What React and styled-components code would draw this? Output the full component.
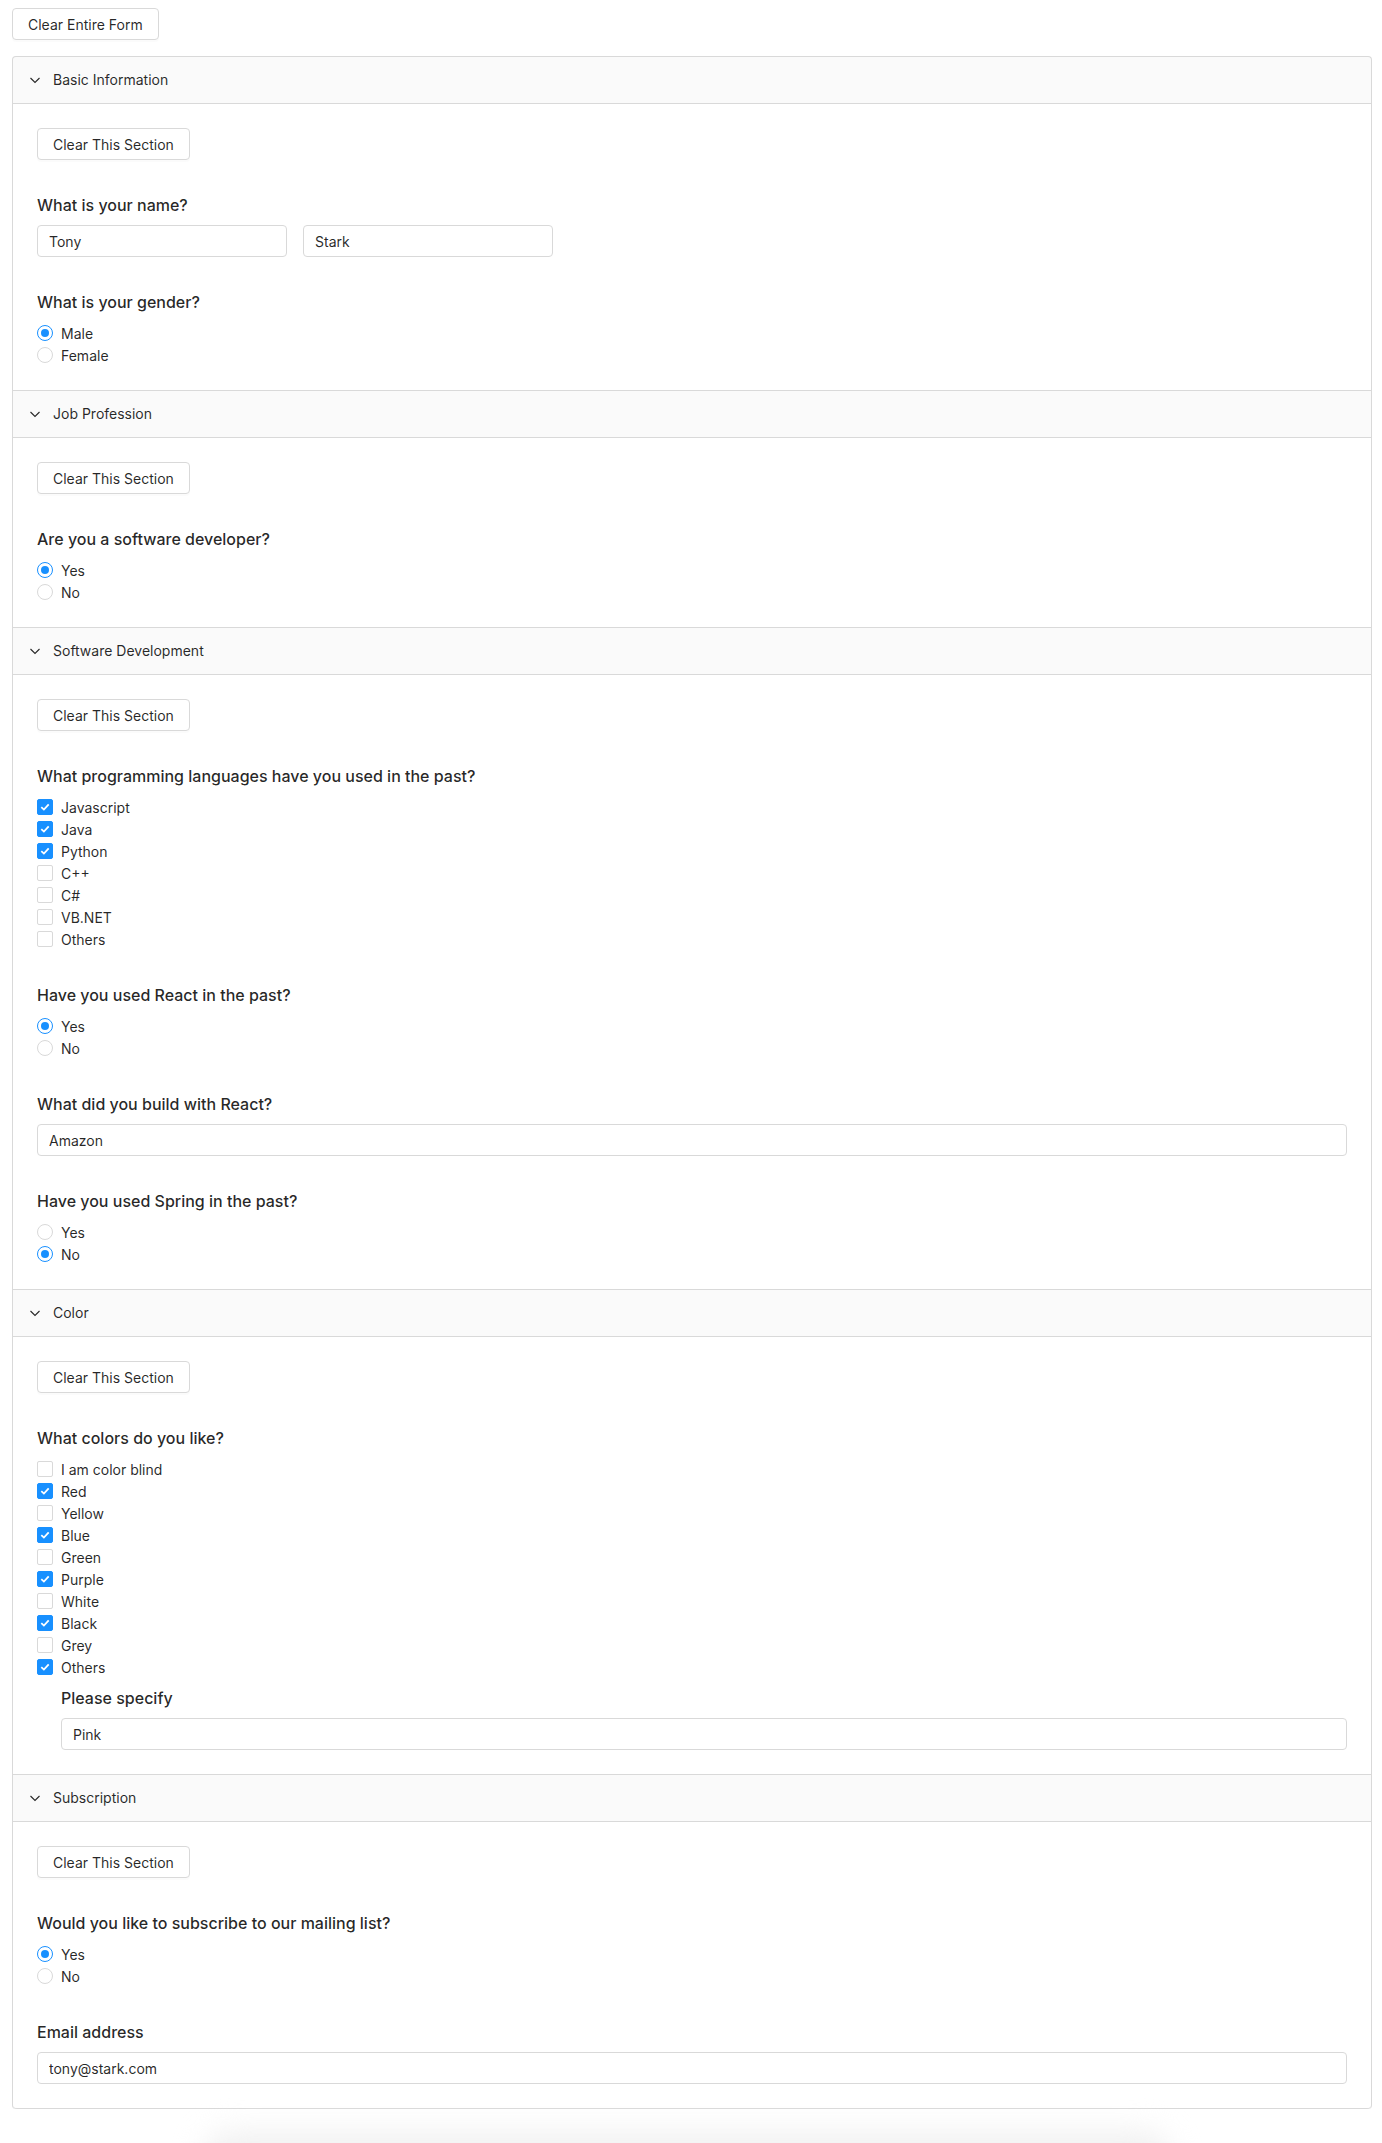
import React from 'react'
import styled, { createGlobalStyle } from 'styled-components'

const GlobalStyle = createGlobalStyle`
  body {
    margin: 0;
    background: #fff;
    font-family: Inter, "Liberation Sans", sans-serif;
    font-size: 14px;
    color: rgba(0, 0, 0, 0.65);
    overflow: hidden;
  }
`

const Page = styled.div`
  padding: 8px 10px 0 12px;
`

const Button = styled.button`
  height: 32px;
  padding: 0 15px;
  font-family: inherit;
  font-size: 14px;
  color: rgba(0, 0, 0, 0.85);
  background: #fff;
  border: 1px solid #d9d9d9;
  border-radius: 4px;
  box-shadow: 0 2px 0 rgba(0, 0, 0, 0.015);
  cursor: pointer;
`

const Collapse = styled.div`
  margin-top: 16px;
  background: #fafafa;
  border: 1px solid #d9d9d9;
  border-bottom: 0;
  border-radius: 4px;
`

const Panel = styled.div`
  border-bottom: 1px solid #d9d9d9;
  &:last-child {
    border-radius: 0 0 4px 4px;
  }
`

const Header = styled.div`
  display: flex;
  align-items: center;
  height: 22px;
  padding: 12px 16px;
  line-height: 22px;
  color: rgba(0, 0, 0, 0.85);
  font-size: 14px;
`

const Arrow = styled.svg`
  width: 12px;
  height: 12px;
  margin-right: 12px;
  color: rgba(0, 0, 0, 0.85);
`

const Body = styled.div`
  background: #fff;
  border-top: 1px solid #d9d9d9;
  padding: 24px;
  ${Panel}:last-child & {
    border-radius: 0 0 4px 4px;
  }
`

const Question = styled.div`
  margin-top: ${(p) => (p.$nested ? '6px' : '31px')};
  margin-left: ${(p) => (p.$nested ? '24px' : '0')};
`

const Label = styled.div`
  font-size: 16px;
  line-height: 28px;
  font-weight: 500;
  color: rgba(0, 0, 0, 0.85);
  margin-bottom: 6px;
`

const InputRow = styled.div`
  display: flex;
  gap: 16px;
`

const Input = styled.input`
  box-sizing: border-box;
  height: 32px;
  width: ${(p) => (p.$short ? '250px' : '100%')};
  padding: 4px 11px;
  font-family: inherit;
  font-size: 14px;
  color: rgba(0, 0, 0, 0.85);
  border: 1px solid #d9d9d9;
  border-radius: 4px;
  outline: none;
`

const OptionList = styled.div`
  display: flex;
  flex-direction: column;
`

const Option = styled.label`
  display: flex;
  align-items: center;
  height: 22px;
  gap: 8px;
  color: rgba(0, 0, 0, 0.85);
  font-size: 14px;
`

const RadioMark = styled.span`
  box-sizing: border-box;
  width: 16px;
  height: 16px;
  border-radius: 50%;
  border: 1px solid ${(p) => (p.$on ? '#1890ff' : '#d9d9d9')};
  background: #fff;
  display: flex;
  align-items: center;
  justify-content: center;
  &::after {
    content: '';
    width: 8px;
    height: 8px;
    border-radius: 50%;
    background: #1890ff;
    display: ${(p) => (p.$on ? 'block' : 'none')};
  }
`

const CheckMark = styled.span`
  box-sizing: border-box;
  width: 16px;
  height: 16px;
  border-radius: 2px;
  border: 1px solid ${(p) => (p.$on ? '#1890ff' : '#d9d9d9')};
  background: ${(p) => (p.$on ? '#1890ff' : '#fff')};
  display: flex;
  align-items: center;
  justify-content: center;
`

const Shade = styled.div`
  margin: 22px 200px 0 190px;
  height: 60px;
  border-radius: 30px;
  background: #f1f1f1;
  filter: blur(14px);
`

const Radios = ({ options, value }) => (
  <OptionList>
    {options.map((o) => (
      <Option key={o}>
        <RadioMark $on={o === value} />
        {o}
      </Option>
    ))}
  </OptionList>
)

const Checks = ({ options, values }) => (
  <OptionList>
    {options.map((o) => {
      const on = values.includes(o)
      return (
        <Option key={o}>
          <CheckMark $on={on}>
            {on && (
              <svg width="10" height="8" viewBox="0 0 10 8">
                <path d="M1.3 4.2 L3.9 6.6 L8.7 1.4" fill="none" stroke="#fff" strokeWidth="1.8" />
              </svg>
            )}
          </CheckMark>
          {o}
        </Option>
      )
    })}
  </OptionList>
)

const Section = ({ title, children }) => (
  <Panel>
    <Header>
      <Arrow viewBox="0 0 12 12">
        <path d="M1.5 4 L6 8.5 L10.5 4" fill="none" stroke="currentColor" strokeWidth="1.1" />
      </Arrow>
      {title}
    </Header>
    <Body>
      <Button>Clear This Section</Button>
      {children}
    </Body>
  </Panel>
)

const App = () => {
  return (
    <Page>
      <GlobalStyle />
      <Button>Clear Entire Form</Button>
      <Collapse>
        <Section title="Basic Information">
          <Question>
            <Label>What is your name?</Label>
            <InputRow>
              <Input $short defaultValue="Tony" />
              <Input $short defaultValue="Stark" />
            </InputRow>
          </Question>
          <Question>
            <Label>What is your gender?</Label>
            <Radios options={['Male', 'Female']} value="Male" />
          </Question>
        </Section>

        <Section title="Job Profession">
          <Question>
            <Label>Are you a software developer?</Label>
            <Radios options={['Yes', 'No']} value="Yes" />
          </Question>
        </Section>

        <Section title="Software Development">
          <Question>
            <Label>What programming languages have you used in the past?</Label>
            <Checks
              options={['Javascript', 'Java', 'Python', 'C++', 'C#', 'VB.NET', 'Others']}
              values={['Javascript', 'Java', 'Python']}
            />
          </Question>
          <Question>
            <Label>Have you used React in the past?</Label>
            <Radios options={['Yes', 'No']} value="Yes" />
          </Question>
          <Question>
            <Label>What did you build with React?</Label>
            <Input defaultValue="Amazon" />
          </Question>
          <Question>
            <Label>Have you used Spring in the past?</Label>
            <Radios options={['Yes', 'No']} value="No" />
          </Question>
        </Section>

        <Section title="Color">
          <Question>
            <Label>What colors do you like?</Label>
            <Checks
              options={['I am color blind', 'Red', 'Yellow', 'Blue', 'Green', 'Purple', 'White', 'Black', 'Grey', 'Others']}
              values={['Red', 'Blue', 'Purple', 'Black', 'Others']}
            />
          </Question>
          <Question $nested>
            <Label>Please specify</Label>
            <Input defaultValue="Pink" />
          </Question>
        </Section>

        <Section title="Subscription">
          <Question>
            <Label>Would you like to subscribe to our mailing list?</Label>
            <Radios options={['Yes', 'No']} value="Yes" />
          </Question>
          <Question>
            <Label>Email address</Label>
            <Input defaultValue="tony@stark.com" />
          </Question>
        </Section>
      </Collapse>
      <Shade />
    </Page>
  )
}

export default App
